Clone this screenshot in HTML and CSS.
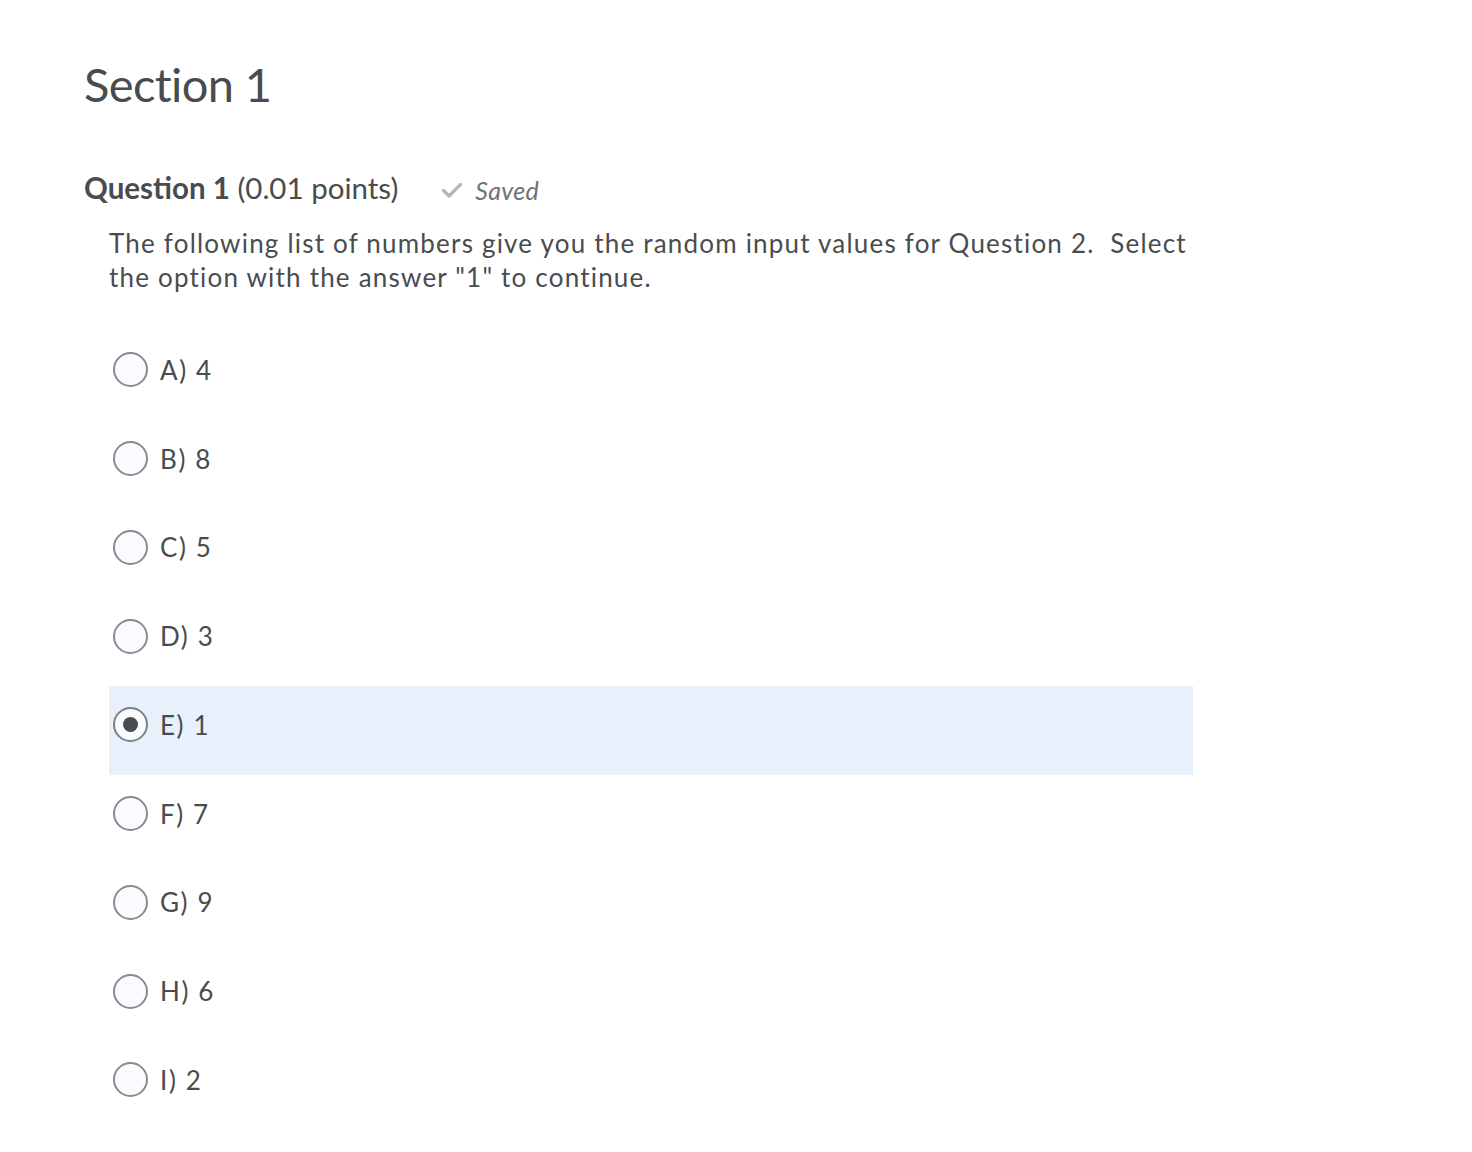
FILE: index.html
```html
<!DOCTYPE html>
<html>
<head>
<meta charset="utf-8">
<link rel="stylesheet" href="styles.css">
</head>
<body>
<main class="page">
  <h1 class="section-title">Section 1</h1>
  <div class="question-head">
    <h2 class="q-title"><strong>Question 1</strong> (0.01 points)</h2>
    <span class="saved">
      <svg class="check" viewBox="0 0 22 18" width="22" height="18"><path d="M2.5 9.5 L8 15 L19.5 3.5" fill="none" stroke="#b3b7ba" stroke-width="3.2" stroke-linecap="round" stroke-linejoin="round"/></svg>
      <em>Saved</em>
    </span>
  </div>
  <p class="q-text">The following list of numbers give you the random input values for Question 2.&nbsp; Select the option with the answer "1" to continue.</p>
  <ul class="options">
    <li class="opt"><span class="radio"></span><span class="label">A) 4</span></li>
    <li class="opt"><span class="radio"></span><span class="label">B) 8</span></li>
    <li class="opt"><span class="radio"></span><span class="label">C) 5</span></li>
    <li class="opt"><span class="radio"></span><span class="label">D) 3</span></li>
    <li class="opt selected"><span class="radio"></span><span class="label">E) 1</span></li>
    <li class="opt"><span class="radio"></span><span class="label">F) 7</span></li>
    <li class="opt"><span class="radio"></span><span class="label">G) 9</span></li>
    <li class="opt"><span class="radio"></span><span class="label">H) 6</span></li>
    <li class="opt"><span class="radio"></span><span class="label">I) 2</span></li>
  </ul>
</main>
</body>
</html>
```

FILE: styles.css
```css
html, body {
  margin: 0;
  padding: 0;
  background: #ffffff;
}
body {
  font-family: Lato, "Noto Sans", sans-serif;
  color: #494c4e;
}
.page {
  padding: 52px 0 0 84px;
  width: 1109px;
}
.section-title {
  margin: 0;
  font-size: 47px;
  letter-spacing: -0.6px;
  font-weight: 400;
  line-height: 64px;
}
.question-head {
  display: flex;
  align-items: baseline;
  margin-top: 52px;
  gap: 43px;
}
.q-title {
  margin: 0;
  font-size: 29.5px;
  font-weight: 400;
  line-height: 40px;
}
.q-title strong {
  font-weight: 700;
}
.saved {
  display: inline-flex;
  align-items: center;
  gap: 12px;
  color: #6e7376;
  font-size: 25px;
  letter-spacing: 0.3px;
}
.check {
  display: block;
}
.q-text {
  margin: 18px 0 0 25px;
  font-size: 26px;
  letter-spacing: 1.2px;
  line-height: 34px;
  width: 1084px;
}
.options {
  list-style: none;
  margin: 37px 0 0 25px;
  padding: 0;
}
.opt {
  display: flex;
  align-items: center;
  height: 88.75px;
  box-sizing: border-box;
  padding: 0 0 11px 4px;
  font-size: 26px;
  letter-spacing: 1.6px;
}
.opt.selected {
  background: #e8f1fb;
}
.radio {
  width: 31px;
  height: 31px;
  border: 2px solid #868c8f;
  border-radius: 50%;
  background: #f9fbff;
  flex: none;
  position: relative;
}
.selected .radio {
  border-color: #7b8184;
}
.selected .radio::after {
  content: "";
  position: absolute;
  left: 50%;
  top: 50%;
  width: 15px;
  height: 15px;
  margin: -7.5px 0 0 -7.5px;
  border-radius: 50%;
  background: #494c4e;
}
.label {
  margin-left: 12px;
}
```
